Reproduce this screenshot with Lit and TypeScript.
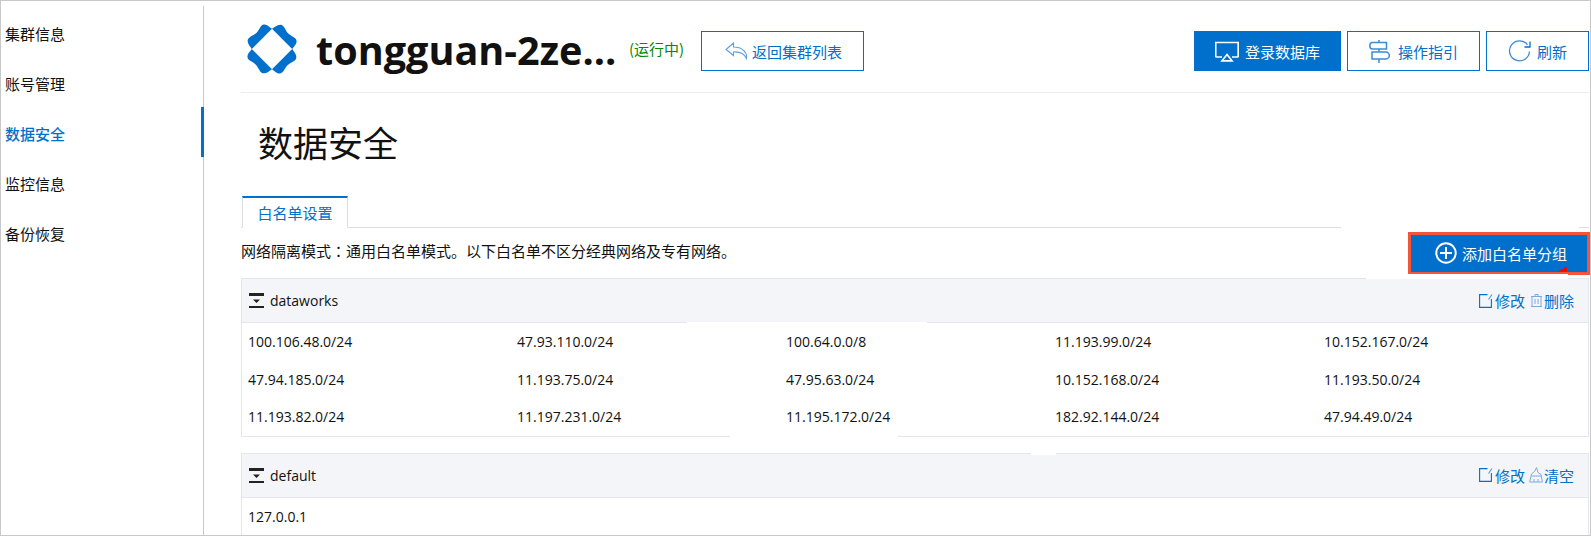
import { LitElement, html, css, svg } from "lit";
import { customElement } from "lit/decorators.js";

const logoBlob = "M26 5C23 3 21 0 17.5 .5 14 1 13 6 10 9 7 12 2 13 .8 16.5 0 20 3 23 5 26Z";

const icons = {
  logo: html`<svg class="logo" viewBox="0 0 52 52">${[0, 90, 180, 270].map(
    (r) => svg`<path d=${logoBlob} fill="#0070cc" transform="rotate(${r} 26 26)"/>`
  )}</svg>`,
  back: html`<svg class="ic" width="23" height="18" viewBox="0 0 23 18" fill="none" stroke="#5f9fdc" stroke-width="1.1"><path d="M8.5 1 1 7.5 8.5 13.5V10C14 9.500 19 11.500 21.500 16.500 22.500 10 17 5 8.500 5Z"/></svg>`,
  login: html`<svg class="ic" width="24" height="21" viewBox="0 0 24 21" fill="none" stroke="#fff" stroke-width="1.700"><path d="M7 16H1.500a.8.8 0 0 1-.8-.8V1.500H23.200V15.200a.8.8 0 0 1-.8.8H17"/><path d="M12 13.500 17 19.800H7Z"/></svg>`,
  guide: html`<svg class="ic" width="21" height="23" viewBox="0 0 21 23" fill="none" stroke="#3d8bd4" stroke-width="1.500"><path d="M10 0V2.500M10 9V12M10 19V23"/><path d="M3.500 2.500H17.500V9H3.500C1 9 .8 7.500 .8 5.700 .8 4 1 2.500 3.500 2.500Z"/><path d="M3 12H17C19 12 20.300 14 20.300 15.500 20.300 17 19 19 17 19H3Z"/></svg>`,
  refresh: html`<svg class="ic" width="23" height="22" viewBox="0 0 23 22" fill="none" stroke="#3d8bd4" stroke-width="1.300"><path d="M19.500 4.800A10 10 0 1 0 21.500 11.500"/><path d="M22 1.500V7H16.500" stroke="#0070cc"/></svg>`,
  plus: html`<svg class="ic" width="22" height="22" viewBox="0 0 22 22" fill="none" stroke="#fff" stroke-width="2"><circle cx="11" cy="11" r="9.700"/><path d="M11 5V17M5 11H17"/></svg>`,
  collapse: html`<svg class="ic" width="15" height="15" viewBox="0 0 15 15"><path d="M0 0H15V3H0ZM0 13H15V15H0ZM4 6.500H11L7.500 10Z" fill="#222"/></svg>`,
  edit: html`<svg class="ic" width="14" height="14" viewBox="0 0 14 14" fill="none" stroke="#0070cc" stroke-width="1.100"><path d="M8.500 .6H.6V13.400H12.400V5"/><path d="M13 .5 9.500 5.500" stroke="#4d9bdc"/></svg>`,
  trash: html`<svg class="ic" width="11" height="13" viewBox="0 0 11 13" fill="none" stroke="#7ea9da" stroke-width="1"><path d="M0 12.500H11M0 2.500H11M1 12.500V2.500M10 12.500V2.500M4 10V5M7 10V5M4 2.500V.5H7V2.500"/></svg>`,
  brush: html`<svg class="ic brush" width="14" height="16" viewBox="0 0 14 16" fill="none" stroke="#7ea9da" stroke-width="1"><path d="M7.500 .6 9 5.500 12 7.500 13.400 15H.6L2.500 7 5.500 4.500Z"/><path d="M2.500 9H12.300M5 15V12M9 15V12"/></svg>`,
};

const nav = ["集群信息", "账号管理", "数据安全", "监控信息", "备份恢复"];
const ips = [
  "100.106.48.0/24", "47.93.110.0/24", "100.64.0.0/8", "11.193.99.0/24", "10.152.167.0/24",
  "47.94.185.0/24", "11.193.75.0/24", "47.95.63.0/24", "10.152.168.0/24", "11.193.50.0/24",
  "11.193.82.0/24", "11.197.231.0/24", "11.195.172.0/24", "182.92.144.0/24", "47.94.49.0/24",
];

@customElement("app-root")
export class AppRoot extends LitElement {
  static styles = css`
    :host {
      display: block;
      position: relative;
      width: 1591px;
      height: 536px;
      overflow: hidden;
      background: #fff;
      color: #111;
      font: 15px "Open Sans", "Noto Sans CJK SC", sans-serif;
    }
    .page {
      box-sizing: border-box;
      height: 536px;
      border: 1px solid #c8c8c8;
      display: flex;
      overflow: hidden;
    }
    .side {
      box-sizing: border-box;
      width: 203px;
      flex: none;
      margin-top: 5px;
      padding-top: 1px;
      border-right: 1px solid #c8c8c8;
    }
    .nav {
      box-sizing: border-box;
      height: 50px;
      padding: 2px 0 0 4px;
      margin-right: -1px;
      display: flex;
      align-items: center;
      font-family: "Noto Sans CJK SC", sans-serif;
    }
    .nav.on {
      color: #0070cc;
      font-weight: 500;
      border-right: 3px solid #0070cc;
    }
    .main {
      flex: 1;
      min-width: 0;
      margin-left: 37px;
    }
    .head {
      box-sizing: border-box;
      height: 92px;
      padding: 30px 0 0 6px;
      border-bottom: 1px solid #eee;
      display: flex;
      align-items: flex-start;
    }
    .logo {
      width: 50px;
      height: 50px;
      margin-top: -7px;
      flex: none;
    }
    .title {
      width: 313px;
      margin-left: 19px;
      margin-top: -6px;
      flex: none;
      font-size: 39.6px;
      font-weight: 700;
      line-height: 50px;
      white-space: nowrap;
    }
    .status {
      width: 72px;
      flex: none;
      color: #008a00;
      line-height: 36px;
      font-family: "Noto Sans CJK SC", sans-serif;
    }
    .btn {
      box-sizing: border-box;
      height: 40px;
      display: flex;
      align-items: center;
      justify-content: center;
      gap: 6px;
      border: 1px solid #0070cc;
      color: #0070cc;
      background: #fff;
      flex: none;
      font-family: "Noto Sans CJK SC", sans-serif;
    }
    .ic { flex: none; display: block; }
    .back { width: 163px; gap: 4px; padding-left: 2px; }
    .btns { margin-left: auto; display: flex; gap: 6px; padding-right: 1px; }
    .login { width: 147px; background: #0070cc; color: #fff; }
    .guide { width: 133px; gap: 8px; }
    .refresh { width: 103px; }
    h1 {
      margin: 0;
      height: 103px;
      box-sizing: border-box;
      padding: 0 0 6px 17px;
      display: flex;
      align-items: center;
      font-size: 35px;
      font-weight: 400;
      font-family: "Noto Sans CJK SC", sans-serif;
    }
    .tabs {
      position: relative;
      height: 32px;
      box-sizing: border-box;
      border-bottom: 1px solid #ddd;
      margin-right: 1px;
      padding-left: 1px;
    }
    .tabgap {
      position: absolute;
      left: 1100px;
      right: 10px;
      bottom: -1px;
      height: 1px;
      background: #fff;
    }
    .tab {
      box-sizing: border-box;
      width: 106px;
      height: 32px;
      border: 1px solid #ddd;
      border-top: 2px solid #0070cc;
      border-bottom: 1px solid #fff;
      background: #fff;
      color: #0070cc;
      display: flex;
      align-items: center;
      justify-content: center;
      font-family: "Noto Sans CJK SC", sans-serif;
    }
    .noterow {
      height: 50px;
      display: flex;
      align-items: center;
      justify-content: space-between;
    }
    .note {
      padding-bottom: 5px;
      font-family: "Noto Sans CJK SC", sans-serif;
    }
    .colon { font-family: "Noto Sans CJK TC", sans-serif; }
    .add {
      position: relative;
      box-sizing: border-box;
      width: 182px;
      height: 43px;
      border: 3px solid #f4553a;
      background: #0070cc;
      color: #fff;
      display: flex;
      align-items: center;
      gap: 5px;
      padding-left: 24px;
      font-family: "Noto Sans CJK SC", sans-serif;
    }
    .add::after {
      content: "";
      position: absolute;
      left: 147px;
      top: 32px;
      width: 9px;
      height: 5px;
      background: #f00;
      clip-path: polygon(100% 0, 100% 100%, 0 100%);
    }
    .panel {
      box-sizing: border-box;
      border: 1px solid #e3e6eb;
      margin: 0 1px 16px 0;
    }
    .phead {
      box-sizing: border-box;
      height: 44px;
      background: #f4f5f9;
      border-bottom: 1px solid #e3e6eb;
      display: flex;
      align-items: center;
      padding: 0 14px 0 7px;
      font-size: 14px;
    }
    .pname { margin-left: 6px; }
    .acts {
      margin-left: auto;
      display: flex;
      align-items: center;
      color: #0070cc;
      font-size: 15px;
      font-family: "Noto Sans CJK SC", sans-serif;
    }
    .act { display: flex; align-items: center; gap: 2px; }
    .act + .act { margin-left: 6px; }
    .brush { margin-left: -2px; margin-right: -1px; }
    .grid {
      display: grid;
      grid-template-columns: repeat(5, 269px);
      grid-auto-rows: 37.5px;
      font-size: 14px;
      padding: 0 0 0 6px;
      align-items: center;
    }
    .patch { position: absolute; background: #fff; }
    .p1 { left: 1366px; top: 274px; width: 202px; height: 5px; }
    .p2 { left: 687px; top: 322px; width: 240px; height: 2px; }
    .p3 { left: 730px; top: 435px; width: 168px; height: 2px; }
    .p4 { left: 1031px; top: 452px; width: 25px; height: 3px; }
  `;

  private panel(name: string, last: unknown, items: string[]) {
    return html`<section class="panel">
      <div class="phead">
        ${icons.collapse}<span class="pname">${name}</span>
        <div class="acts">
          <span class="act">${icons.edit}修改</span>
          ${last}
        </div>
      </div>
      <div class="grid">${items.map((i) => html`<span>${i}</span>`)}</div>
    </section>`;
  }

  render() {
    return html`<div class="page">
        <aside class="side">
          ${nav.map((n, i) => html`<div class="nav ${i === 2 ? "on" : ""}">${n}</div>`)}
        </aside>
        <main class="main">
          <header class="head">
            ${icons.logo}
            <div class="title">tongguan-2ze...</div>
            <div class="status">(运行中)</div>
            <div class="btn back">${icons.back}返回集群列表</div>
            <div class="btns">
              <div class="btn login">${icons.login}登录数据库</div>
              <div class="btn guide">${icons.guide}操作指引</div>
              <div class="btn refresh">${icons.refresh}刷新</div>
            </div>
          </header>
          <h1>数据安全</h1>
          <div class="tabs"><div class="tab">白名单设置</div><div class="tabgap"></div></div>
          <div class="noterow">
            <div class="note">网络隔离模式<span class="colon">${"\uFF1A"}</span>通用白名单模式。以下白名单不区分经典网络及专有网络。</div>
            <div class="add">${icons.plus}添加白名单分组</div>
          </div>
          ${this.panel("dataworks", html`<span class="act">${icons.trash}删除</span>`, ips)}
          ${this.panel("default", html`<span class="act">${icons.brush}清空</span>`, ["127.0.0.1"])}
        </main>
      </div>
      <div class="patch p1"></div>
      <div class="patch p2"></div>
      <div class="patch p3"></div>
      <div class="patch p4"></div>`;
  }
}
